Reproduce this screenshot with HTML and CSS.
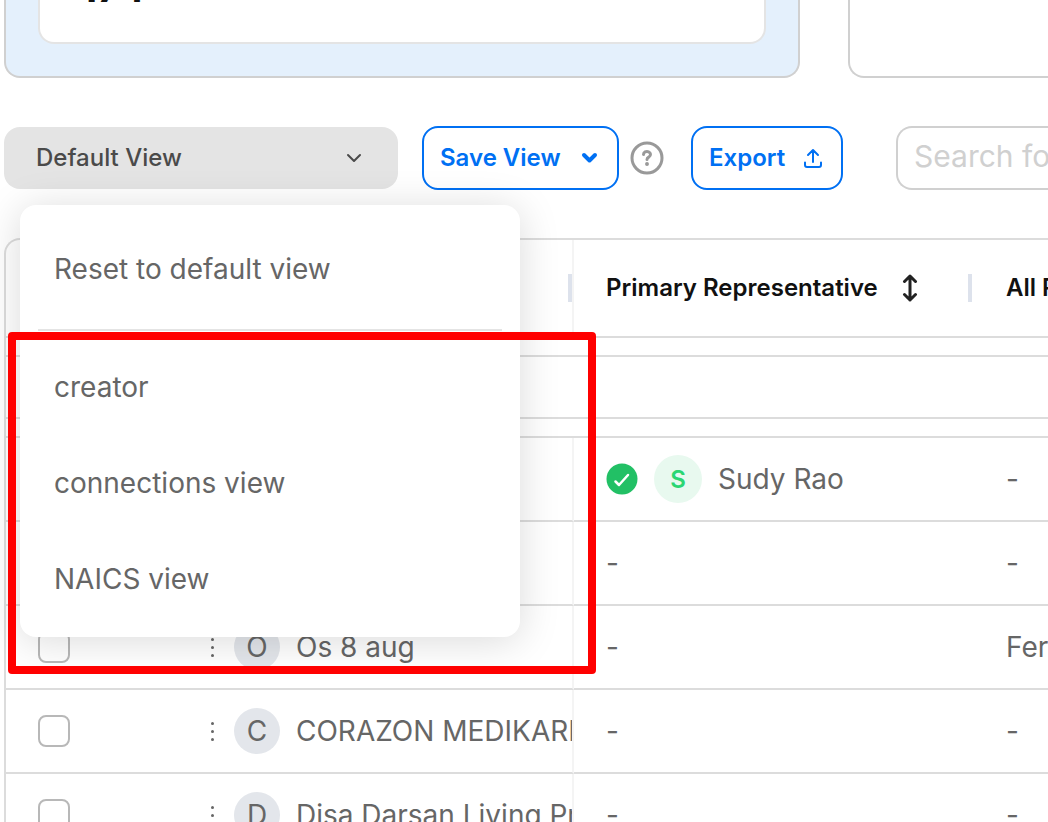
FILE: index.html
```html
<!DOCTYPE html>
<html lang="en">
<head>
    <meta charset="UTF-8">
    <meta name="viewport" content="width=device-width, initial-scale=1.0">
    <title>Companies</title>
    <link rel="stylesheet" href="styles.css">
</head>
<body>
    <div class="cards">
        <div class="card card-active">
            <div class="card-inner"><span class="card-value">174</span></div>
        </div>
        <div class="card card-next"></div>
    </div>

    <div class="toolbar">
        <div class="view-picker">
            <button class="view-button" aria-haspopup="true" aria-expanded="true">
                <span class="label">Default View</span>
                <svg width="16" height="10" viewBox="0 0 16 10" fill="none" stroke="#4a4a4a" stroke-width="2" stroke-linecap="round" stroke-linejoin="round"><path d="M2 2l6 6 6-6"/></svg>
            </button>
            <div class="view-menu">
                <button class="menu-item menu-reset">Reset to default view</button>
                <hr>
                <button class="menu-item">creator</button>
                <button class="menu-item">connections view</button>
                <button class="menu-item">NAICS view</button>
            </div>
        </div>
        <button class="outline-button save-button">
            <span class="label">Save View</span>
            <svg width="18" height="12" viewBox="0 0 18 12" fill="none" stroke="#0070f3" stroke-width="4" stroke-linecap="round" stroke-linejoin="round"><path d="M3 3l5.500 5.500L14 3"/></svg>
        </button>
        <button class="help-button" aria-label="Help">
            <svg width="34" height="34" viewBox="0 0 34 34" fill="none" stroke="#999" stroke-width="3" stroke-linecap="round" stroke-linejoin="round"><circle cx="17" cy="17" r="15"/><path d="M13.500 13.500a3.500 3 0 1 1 5.500 2.400Q17 17 17 18.500"/><circle cx="17" cy="23" r="1.200" fill="#999" stroke-width="1.500"/></svg>
        </button>
        <button class="outline-button export-button">
            <span class="label">Export</span>
            <svg width="20" height="22" viewBox="0 0 20 22" fill="none" stroke="#0070f3" stroke-width="2" stroke-linecap="round" stroke-linejoin="round"><path d="M10 15V3M5 8l5-5 5 5M2 15.500V18q0 2 2 2h12q2 0 2-2v-2.500"/></svg>
        </button>
        <input class="search" type="text" placeholder="Search for companies" aria-label="Search">
    </div>

    <div class="table-frame">
        <table>
            <colgroup><col class="col-name"><col class="col-primary"><col></colgroup>
            <thead>
                <tr>
                    <th><div class="head"></div></th>
                    <th>
                        <div class="head"><span class="label">Primary Representative</span>
                            <svg width="16" height="28" viewBox="0 0 16 28" fill="none" stroke="#222" stroke-width="3" stroke-linecap="round" stroke-linejoin="round"><path d="M8 2v24M2.500 7.500L8 2l5.500 5.500M2.500 20.500L8 26l5.500-5.500"/></svg>
                        </div>
                    </th>
                    <th><div class="head"><span class="label">All Representatives</span></div></th>
                </tr>
            </thead>
            <tbody>
                <tr class="spacer"><td colspan="3"></td></tr>
                <tr class="blank"><td colspan="3"></td></tr>
                <tr class="spacer"><td colspan="3"></td></tr>
                <tr class="row">
                    <td></td>
                    <td>
                        <div class="person">
                            <svg width="32" height="32" viewBox="0 0 32 32" fill="none"><circle cx="16" cy="16" r="15.500" fill="#22c065"/><path d="M9.500 18.500l3.500 3.500L22 12" stroke="#fff" stroke-width="2.500" stroke-linecap="round" stroke-linejoin="round"/></svg>
                            <span class="avatar avatar-green">S</span>
                            <span>Sudy Rao</span>
                        </div>
                    </td>
                    <td>-</td>
                </tr>
                <tr class="row"><td></td><td>-</td><td>-</td></tr>
                <tr class="row">
                    <td><div class="company">
                        <input type="checkbox" aria-label="Select Os 8 aug">
                        <button class="dots" aria-label="Actions"><i></i><i></i><i></i></button>
                        <span class="avatar">O</span><span class="name">Os 8 aug</span>
                    </div></td>
                    <td>-</td>
                    <td>Fernando</td>
                </tr>
                <tr class="row">
                    <td><div class="company">
                        <input type="checkbox" aria-label="Select CORAZON MEDIKARE">
                        <button class="dots" aria-label="Actions"><i></i><i></i><i></i></button>
                        <span class="avatar">C</span><span class="name">CORAZON MEDIKARE</span>
                    </div></td>
                    <td>-</td>
                    <td>-</td>
                </tr>
                <tr class="row">
                    <td><div class="company">
                        <input type="checkbox" aria-label="Select Disa Darsan Living">
                        <button class="dots" aria-label="Actions"><i></i><i></i><i></i></button>
                        <span class="avatar">D</span><span class="name">Disa Darsan Living Pri</span>
                    </div></td>
                    <td>-</td>
                    <td>-</td>
                </tr>
            </tbody>
        </table>
    </div>
    <div class="highlight"></div>
</body>
</html>
```

FILE: styles.css
```css
* {
    box-sizing: border-box;
}
body {
    margin: 0;
    height: 100vh;
    overflow: hidden;
    position: relative;
    font-family: Inter, sans-serif;
    font-size: 28px;
    color: #666;
    background: #fff;
}
button {
    font-family: inherit;
    border: none;
    background: none;
    cursor: pointer;
}
.label {
    padding-bottom: 2px;
}
.cards {
    display: grid;
    grid-template-columns: 796px 1fr;
    gap: 48px;
    height: 78px;
    padding-left: 4px;
}
.card {
    border: 2px solid #d0d0d0;
    border-top: none;
    border-radius: 0 0 16px 16px;
    padding: 0 32px 32px;
}
.card-active {
    background: #e4f0fc;
}
.card-next {
    border-right: none;
    border-radius: 0 0 0 16px;
}
.card-inner {
    display: flex;
    align-items: flex-end;
    height: 44px;
    padding: 0 0 30px 40px;
    background: #fff;
    border: 2px solid #e4e4e4;
    border-top: none;
    border-radius: 0 0 16px 16px;
}
.card-value {
    font-size: 40px;
    line-height: 48px;
    font-weight: 700;
    color: #111;
}
.toolbar {
    display: flex;
    align-items: center;
    height: 64px;
    margin-top: 48px;
    padding-left: 4px;
}
.view-picker {
    position: relative;
    flex: none;
    width: 394px;
    margin-right: 24px;
}
.view-button {
    display: flex;
    align-items: center;
    justify-content: space-between;
    width: 100%;
    height: 62px;
    padding: 0 36px 0 32px;
    border-radius: 16px;
    background: #e4e4e4;
    color: #4a4a4a;
    font-size: 24px;
    font-weight: 500;
}
.view-menu {
    position: absolute;
    z-index: 2;
    top: 78px;
    left: 16px;
    width: 500px;
    padding: 16px 18px 10px;
    border-radius: 16px;
    background: #fff;
    box-shadow: 0 4px 40px rgba(0, 0, 0, 0.15);
}
.view-menu hr {
    height: 2px;
    margin: 12px 0 8px;
    border: none;
    background: #e4e4e4;
}
.menu-item {
    display: block;
    width: 100%;
    height: 96px;
    padding: 0 16px;
    text-align: left;
    font-size: 28px;
    color: #666;
}
.outline-button {
    display: flex;
    flex: none;
    align-items: center;
    justify-content: space-between;
    height: 64px;
    padding: 0 18px 0 16px;
    border: 2px solid #0070f3;
    border-radius: 16px;
    background: #fff;
    color: #0070f3;
    font-size: 24px;
    font-weight: 600;
}
.save-button {
    width: 197px;
}
.help-button {
    display: flex;
    flex: none;
    margin: 0 27px 0 11px;
    padding: 0;
}
.export-button {
    width: 152px;
    margin-right: 53px;
}
.search {
    flex: 1;
    min-width: 0;
    height: 64px;
    padding: 0 0 4px 16px;
    border: 2px solid #d0d0d0;
    border-right: none;
    border-radius: 16px 0 0 16px;
    font-family: inherit;
    font-size: 30px;
}
.search::placeholder {
    color: #d0d0d0;
}
.table-frame {
    margin: 48px 0 0 4px;
    border: 2px solid #dcdcdc;
    border-right: none;
    border-radius: 16px 0 0 16px;
}
table {
    width: 100%;
    table-layout: fixed;
    border-collapse: separate;
    border-spacing: 0;
}
.col-name {
    width: 568px;
}
.col-primary {
    width: 398px;
}
th, td {
    padding: 0 0 0 32px;
    border-bottom: 2px solid #dcdcdc;
    text-align: left;
    white-space: nowrap;
    overflow: hidden;
}
th {
    height: 98px;
    font-size: 24px;
    font-weight: 600;
    color: #111;
}
th:last-child, td:last-child {
    padding-left: 34px;
}
th:first-child, .row td:first-child {
    border-right: 2px solid #f4f4f4;
}
.head {
    display: flex;
    align-items: center;
    gap: 24px;
    height: 28px;
    border-right: 4px solid #dde2ec;
}
th:last-child .head {
    border-right: none;
}
.spacer td {
    height: 19px;
}
.blank td {
    height: 62px;
}
.row td {
    height: 84px;
}
.person, .company {
    display: flex;
    align-items: center;
    gap: 16px;
}
.name {
    min-width: 0;
    overflow: hidden;
}
.avatar {
    display: flex;
    flex: none;
    align-items: center;
    justify-content: center;
    width: 46px;
    height: 46px;
    border-radius: 50%;
    background: #e3e6eb;
}
.avatar-green {
    width: 48px;
    height: 48px;
    background: #e8f9ef;
    color: #2bd673;
    font-size: 24px;
    font-weight: 600;
}
.company input {
    appearance: none;
    flex: none;
    width: 32px;
    height: 32px;
    margin: 0 121px 0 0;
    border: 2px solid #b8b8b8;
    border-radius: 8px;
    background: #fff;
}
.dots {
    display: flex;
    flex: none;
    flex-direction: column;
    gap: 5px;
    padding: 0 4px;
}
.dots i {
    width: 3px;
    height: 3px;
    border-radius: 50%;
    background: #666;
}
/* red frame drawn over the saved views */
.highlight {
    position: absolute;
    z-index: 3;
    top: 332px;
    left: 8px;
    width: 588px;
    height: 342px;
    border: 8px solid #f00;
    border-radius: 4px;
    pointer-events: none;
}
```
